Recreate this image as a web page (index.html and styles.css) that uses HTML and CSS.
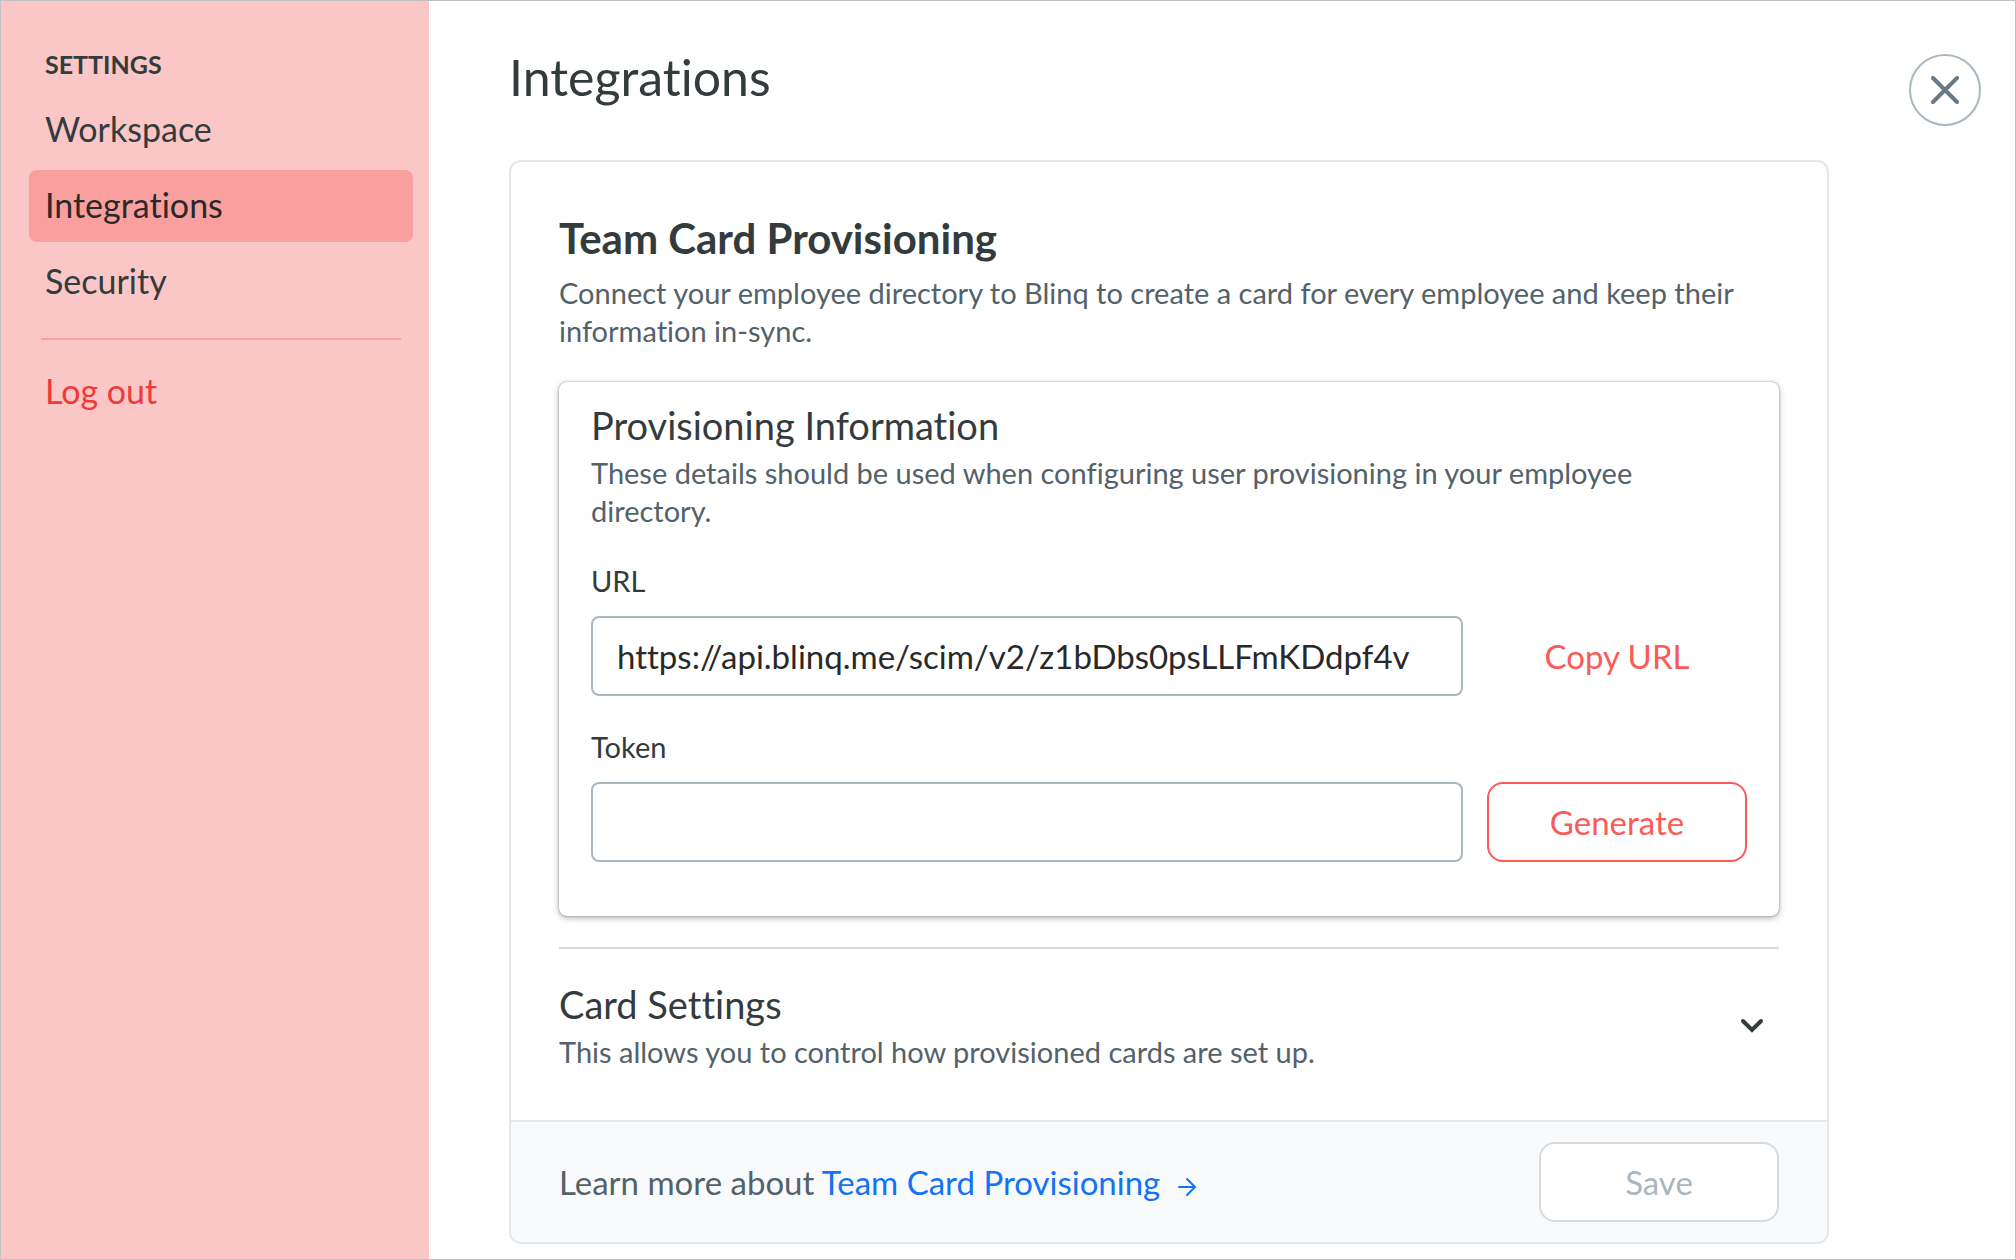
FILE: index.html
```html
<!DOCTYPE html>
<html lang="en">
<head>
<meta charset="utf-8">
<title>Integrations</title>
<meta name="viewport" content="width=device-width, initial-scale=1">
<link rel="stylesheet" href="styles.css">
</head>
<body>
<div class="app">
  <aside class="sidebar">
    <h2 class="sidebar-title">SETTINGS</h2>
    <nav class="nav" aria-label="Settings">
      <a class="nav-link" href="#workspace">Workspace</a>
      <a class="nav-link nav-link-active" href="#integrations" aria-current="page">Integrations</a>
      <a class="nav-link" href="#security">Security</a>
      <hr class="nav-divider">
      <a class="nav-link nav-link-danger" href="#logout">Log out</a>
    </nav>
  </aside>
  <main class="main">
    <div class="content">
      <h1 class="page-title">Integrations</h1>
      <section class="card">
        <div class="card-body">
          <h2 class="card-title">Team Card Provisioning</h2>
          <p class="text">Connect your employee directory to Blinq to create a card for every employee and keep their information in-sync.</p>
          <form class="panel">
            <h3 class="section-title">Provisioning Information</h3>
            <p class="text">These details should be used when configuring user provisioning in your employee directory.</p>
            <div class="field">
              <label class="label" for="url">URL</label>
              <div class="field-row">
                <input class="input" id="url" type="text" readonly value="https://api.blinq.me/scim/v2/z1bDbs0psLLFmKDdpf4v">
                <button class="button button-plain" type="button">Copy URL</button>
              </div>
            </div>
            <div class="field">
              <label class="label" for="token">Token</label>
              <div class="field-row">
                <input class="input" id="token" type="text">
                <button class="button button-outline" type="button">Generate</button>
              </div>
            </div>
          </form>
          <hr class="divider">
          <div class="accordion">
            <div>
              <h3 class="section-title">Card Settings</h3>
              <p class="text">This allows you to control how provisioned cards are set up.</p>
            </div>
            <button class="toggle" type="button" aria-label="Expand card settings" aria-expanded="false">
              <svg class="chevron" viewBox="0 0 28 20" aria-hidden="true"><path d="M5 5l9 9 9-9"/></svg>
            </button>
          </div>
        </div>
        <footer class="card-footer">
          <p class="learn">Learn more about <a class="link" href="#provisioning">Team Card Provisioning
            <svg class="arrow" viewBox="0 0 20 20" aria-hidden="true"><path d="M2 10h16M10 2l8 8-8 8"/></svg></a></p>
          <button class="button button-save" type="button" disabled>Save</button>
        </footer>
      </section>
    </div>
    <button class="close" type="button" aria-label="Close">
      <svg class="close-icon" viewBox="0 0 28 28" aria-hidden="true"><path d="M2 2l24 24M26 2L2 26"/></svg>
    </button>
  </main>
</div>
</body>
</html>
```
FILE: styles.css
```css
* { box-sizing: border-box; }

body {
  margin: 0;
  background: #fff;
  color: #343b3d;
  font-family: Lato, "Noto Sans", sans-serif;
  font-size: 33px;
  font-variant-ligatures: none;
}

h1, h2, h3, p { margin: 0; }

button, input { font: inherit; font-variant-ligatures: none; }

.app {
  display: flex;
  min-height: 100vh;
  border: 1px solid #c1c1c1;
}

.sidebar {
  flex: 0 0 428px;
  padding: 44px 16px 0 28px;
  background: #fac6c6;
}

.sidebar-title {
  padding-left: 16px;
  font-size: 25px;
  line-height: 38px;
  font-weight: 700;
}

.nav {
  display: flex;
  flex-direction: column;
  gap: 4px;
  margin-top: 11px;
}

.nav-link {
  padding: 0 16px 2px;
  border-radius: 8px;
  color: inherit;
  font-size: 34px;
  line-height: 70px;
  text-decoration: none;
}

.nav-link-active { background: #f9a09f; color: #292929; }
.nav-link-danger { color: #ee3a39; }

.nav-divider {
  width: 360px;
  height: 2px;
  margin: 16px 12px 12px;
  border: 0;
  background: #f9a09f;
}

.main {
  flex: 1;
  display: flex;
  justify-content: space-between;
  align-items: flex-start;
  padding: 0 34px 0 80px;
}

.content {
  flex: 0 1 1320px;
  margin-bottom: 12px;
}

.page-title {
  padding: 40px 0 47px;
  font-size: 50px;
  line-height: 72px;
  font-weight: 400;
}

.card {
  overflow: hidden;
  border: 2px solid #e4e8ec;
  border-radius: 12px;
}

.card-body { padding: 48px 48px 49px; }

.card-title {
  padding-bottom: 8px;
  font-size: 42px;
  line-height: 56px;
  font-weight: 700;
}

.section-title {
  padding-bottom: 6px;
  font-size: 38px;
  line-height: 46px;
  font-weight: 400;
}

.text {
  color: #53626a;
  font-size: 29px;
  line-height: 38px;
}

.panel {
  margin-top: 32px;
  padding: 20px 32px 54px;
  border-radius: 8px;
  box-shadow: 0 0 2px rgba(0, 0, 0, 0.4), 0 2px 6px rgba(0, 0, 0, 0.3);
}

.field { margin-top: 32px; }

.label {
  display: block;
  margin-bottom: 16px;
  font-size: 29px;
  line-height: 38px;
}

.field-row { display: flex; gap: 24px; }

.input {
  flex: 1;
  min-width: 0;
  height: 80px;
  padding: 0 24px;
  border: 2px solid #abb7be;
  border-radius: 8px;
  background: #fff;
  color: #292929;
}

.button {
  flex: 0 0 260px;
  height: 80px;
  border: 2px solid transparent;
  border-radius: 16px;
  background: #fff;
  color: #fa5a58;
}

.button-outline { border-color: #fa5a58; }

.button-save {
  flex-basis: 240px;
  border-color: #d5dade;
  color: #abb7be;
}

.divider {
  height: 2px;
  margin: 31px 0 32px;
  border: 0;
  background: #d5dade;
}

.accordion {
  display: flex;
  justify-content: space-between;
  align-items: center;
}

.toggle {
  padding: 0 13px;
  border: 0;
  background: none;
  line-height: 0;
}

.chevron, .arrow, .close-icon {
  fill: none;
  stroke: currentColor;
  stroke-linecap: round;
}

.chevron { width: 28px; height: 20px; color: #343b3d; stroke-width: 4; }

.card-footer {
  display: flex;
  justify-content: space-between;
  align-items: center;
  padding: 20px 48px;
  border-top: 2px solid #e4e8ec;
  background: #f9fafc;
}

.learn { color: #53626a; line-height: 44px; }

.link { color: #1273f5; text-decoration: none; }

.arrow { width: 20px; height: 20px; margin-left: 8px; stroke-width: 2; vertical-align: -2px; }

.close {
  flex: 0 0 72px;
  height: 72px;
  margin-top: 53px;
  padding: 0;
  border: 2px solid #abb7be;
  border-radius: 50%;
  background: #fff;
  color: #687a86;
  line-height: 0;
}

.close-icon { width: 28px; height: 28px; stroke-width: 4; }
```
